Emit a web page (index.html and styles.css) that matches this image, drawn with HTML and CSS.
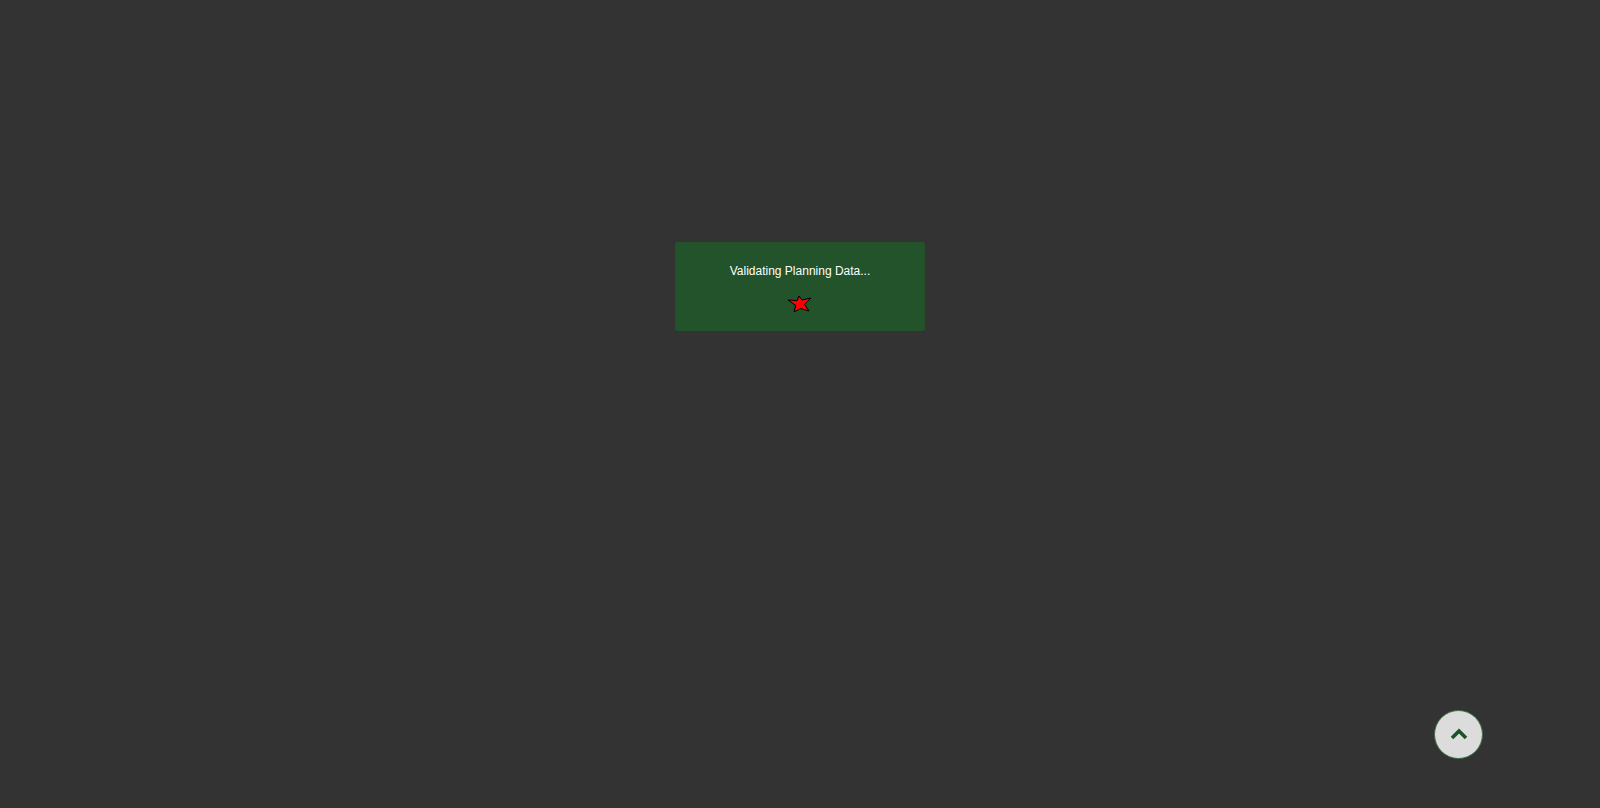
FILE: index.html
```html
<!DOCTYPE html>
<html lang="en">
<head>
<meta charset="utf-8">
<title>Validating</title>
<link rel="stylesheet" href="styles.css">
</head>
<body>
<main class="page">
  <div class="loader">
    <p class="loader-text">Validating Planning Data...</p>
    <svg class="loader-star" width="26" height="24" viewBox="-13 -12 26 24" aria-hidden="true">
      <polygon points="-12,-4 -2.9,-3.4 -1,-8 2,-4 11,-6 4.5,0.4 9,7 0.6,4.5 -6,8 -4.3,1.4" fill="#ff0000" stroke="#000" stroke-width="1" stroke-linejoin="miter"/>
    </svg>
  </div>
</main>
<button class="to-top" type="button" aria-label="Back to top">
  <svg width="18" height="14" viewBox="0 0 18 14" aria-hidden="true">
    <path d="M2 11 L9 4 L16 11" fill="none" stroke="#1d5226" stroke-width="3.6" stroke-linecap="butt" stroke-linejoin="miter"/>
  </svg>
</button>
</body>
</html>
```
FILE: styles.css
```css
html, body {
  margin: 0;
  padding: 0;
  background: #333333;
  height: 100%;
}
body {
  font-family: "Liberation Sans", Arial, sans-serif;
  overflow: hidden;
}
.page {
  padding-top: 242px;
  display: flex;
  justify-content: center;
}
.loader {
  width: 250px;
  height: 89px;
  box-sizing: border-box;
  background: #22532a;
  border-radius: 3px;
  padding-top: 22px;
  display: flex;
  flex-direction: column;
  align-items: center;
}
.loader-text {
  margin: 0;
  color: #ffffff;
  font-size: 12px;
  line-height: 14px;
}
.loader-star {
  display: block;
  margin-top: 14px;
}
.to-top {
  position: fixed;
  right: 117px;
  bottom: 49px;
  width: 49px;
  height: 49px;
  border-radius: 50%;
  background: #dcdcdc;
  border: 1px solid #3b6e42;
  padding: 0;
  display: flex;
  align-items: center;
  justify-content: center;
  cursor: pointer;
}
.to-top svg {
  display: block;
  margin-top: -2px;
}
```
